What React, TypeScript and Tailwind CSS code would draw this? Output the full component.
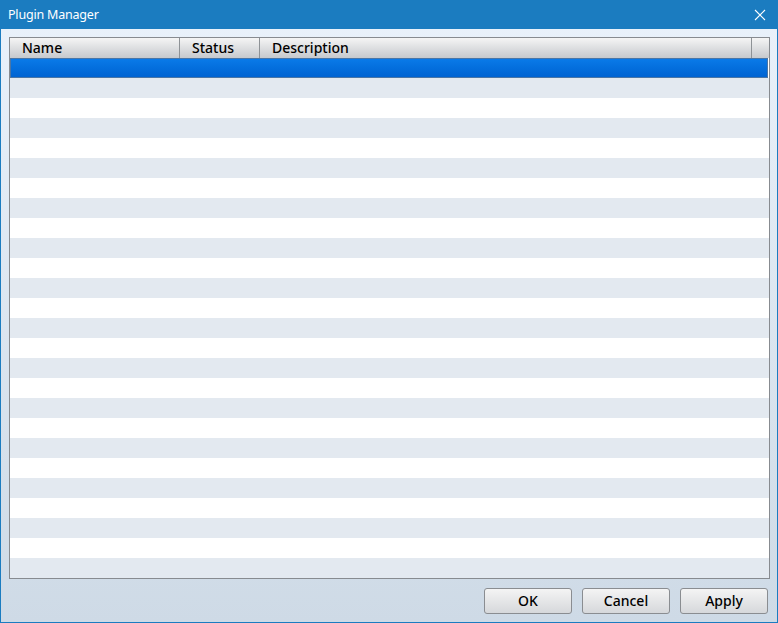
import React from "react";

export default function App() {
  const rows = Array.from({ length: 25 }, (_, i) => i);
  return (
    <div
      className="w-[778px] h-[623px] flex flex-col border border-[#1b7cc0] bg-gradient-to-b from-[#eaf2fb] to-[#cedae6] overflow-hidden"
      style={{ fontFamily: '"Noto Sans", "Open Sans", sans-serif' }}
    >
      {/* Title bar */}
      <div className="h-[28px] shrink-0 bg-[#1b7cc0] flex items-center justify-between pl-[7px] pr-[11px] text-white">
        <span className="text-[12.5px] leading-none tracking-[-0.2px]">Plugin Manager</span>
        <svg width="12" height="12" viewBox="0 0 12 12">
          <path d="M1 1 L11 11 M11 1 L1 11" stroke="white" strokeWidth="1.1" fill="none" />
        </svg>
      </div>

      {/* Content */}
      <div className="flex-1 flex flex-col pt-[8px] pl-[8px] pr-[7px] pb-[8px]">
        {/* Table */}
        <div className="h-[542px] w-[761px] border border-[#878b90] bg-white flex flex-col">
          {/* Header */}
          <div className="h-[20px] shrink-0 flex bg-gradient-to-b from-[#f5f5f5] to-[#c6c9cd] text-[14px] font-medium leading-none text-black">
            <div className="w-[170px] border-r border-[#8e9296] flex items-center pl-[12px]">Name</div>
            <div className="w-[80px] border-r border-[#8e9296] flex items-center pl-[12px]">Status</div>
            <div className="w-[492px] border-r border-[#8e9296] flex items-center pl-[12px]">Description</div>
            <div className="flex-1" />
          </div>
          {/* Selected row */}
          <div className="h-[20px] shrink-0 pr-[1px]">
            <div className="h-full border border-[#4a76a6] bg-gradient-to-b from-[#0a7ae8] to-[#0063d2]" />
          </div>
          {/* Rows */}
          {rows.map((i) => (
            <div
              key={i}
              className={i % 2 === 0 ? "h-[20px] shrink-0 bg-[#e3e9f0]" : "h-[20px] shrink-0 bg-white"}
            />
          ))}
        </div>

        {/* Buttons */}
        <div className="flex justify-end gap-[10px] mt-[9px] pr-[2px]">
          {["OK", "Cancel", "Apply"].map((label) => (
            <button
              key={label}
              className="w-[88px] h-[26px] rounded-[3px] border border-[#8a8d91] bg-gradient-to-b from-[#f4f4f4] to-[#d6d8db] text-[14px] font-medium leading-none text-black flex items-center justify-center"
            >
              {label}
            </button>
          ))}
        </div>
      </div>
    </div>
  );
}
